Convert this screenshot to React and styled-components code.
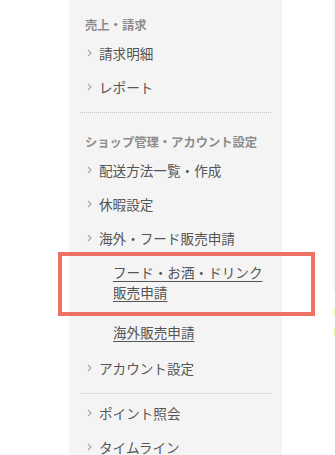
import styled, { createGlobalStyle } from "styled-components"

const GlobalStyle = createGlobalStyle`
  html, body {
    margin: 0;
    padding: 0;
    background: #ffffff;
  }
  body {
    font-family: "Noto Sans CJK JP", "Noto Sans", sans-serif;
  }
`

const sections = [
  {
    title: "売上・請求",
    items: [{ label: "請求明細" }, { label: "レポート" }],
  },
  {
    title: "ショップ管理・アカウント設定",
    items: [
      { label: "配送方法一覧・作成" },
      { label: "休暇設定" },
      {
        label: "海外・フード販売申請",
        subs: [
          { label: ["フード・お酒・ドリンク", "販売申請"], highlight: true },
          { label: ["海外販売申請"] },
        ],
      },
      { label: "アカウント設定" },
    ],
  },
  {
    items: [{ label: "ポイント照会" }, { label: "タイムライン" }],
  },
]

function Chevron() {
  return (
    <ChevronIcon width="5" height="8" viewBox="0 0 5 8">
      <path d="M1 1 L4 4 L1 7" fill="none" stroke="#a8a8a8" strokeWidth="1.2" />
    </ChevronIcon>
  )
}

export default function App() {
  return (
    <>
      <GlobalStyle />
      <Page>
        <Sidebar>
          {sections.map((section, i) => (
            <Section key={i} $first={i === 0} $last={i === sections.length - 1} $untitled={!section.title}>
              {section.title && <SectionTitle>{section.title}</SectionTitle>}
              {section.items.map((item) => (
                <div key={item.label}>
                  <Item>
                    <Chevron />
                    <span>{item.label}</span>
                  </Item>
                  {item.subs && (
                    <SubList>
                      {item.subs.map((sub) => (
                        <SubItem key={sub.label.join("")}>
                          <SubLink href="#">
                            {sub.label.map((line) => (
                              <span key={line}>{line}</span>
                            ))}
                          </SubLink>
                          {sub.highlight && <Highlight />}
                        </SubItem>
                      ))}
                    </SubList>
                  )}
                </div>
              ))}
            </Section>
          ))}
        </Sidebar>
        <Content>
          <Note />
          <Note />
        </Content>
      </Page>
    </>
  )
}

const Page = styled.div`
display: flex;
align-items: flex-start;
padding-left: 69px;
height: 455px;
overflow: hidden;
`
const Sidebar = styled.nav`
width: 213px;
min-height: 470px;
background: #f4f4f4;
flex-shrink: 0;
`
const Section = styled.div`
padding: ${(p) => (p.$first ? "14px" : p.$untitled ? "2px" : "18px")} 0 ${(p) => (p.$last ? "0" : "8px")};
margin: 0 11px;
border-bottom: ${(p) => (p.$last ? "none" : "1px dotted #c4c4c4")};
`
const SectionTitle = styled.div`
font-size: 12.3px;
font-weight: 700;
line-height: 22px;
color: #8c8c8c;
padding-left: 5px;
white-space: nowrap;
`
const Item = styled.div`
height: 34px;
display: flex;
align-items: center;
padding-left: 7px;
font-size: 13.6px;
color: #555555;
white-space: nowrap;
span {
margin-left: 7px;
}
`
const ChevronIcon = styled.svg`
display: block;
flex-shrink: 0;
`
const SubList = styled.div`
display: flex;
flex-direction: column;
gap: 20px;
padding: 7px 0 9px 33px;
`
const SubItem = styled.div`
position: relative;
`
const SubLink = styled.a`
display: flex;
flex-direction: column;
font-size: 13.6px;
line-height: 20px;
color: #555555;
text-decoration: none;
white-space: nowrap;
span {
text-decoration: underline;
text-underline-offset: 3px;
align-self: flex-start;
}
`
const Highlight = styled.div`
position: absolute;
left: -55px;
top: -10px;
width: 257px;
height: 64px;
box-sizing: border-box;
border: 4px solid #ef7163;
pointer-events: none;
`
const Content = styled.div`
margin-left: 51px;
width: 10px;
height: 292px;
background: #f7f7f7;
position: relative;
`
const Note = styled.div`
position: absolute;
top: 308px;
left: 0;
width: 2px;
height: 8px;
background: #fafac0;
&:nth-child(2) {
top: 328px;
}
`
